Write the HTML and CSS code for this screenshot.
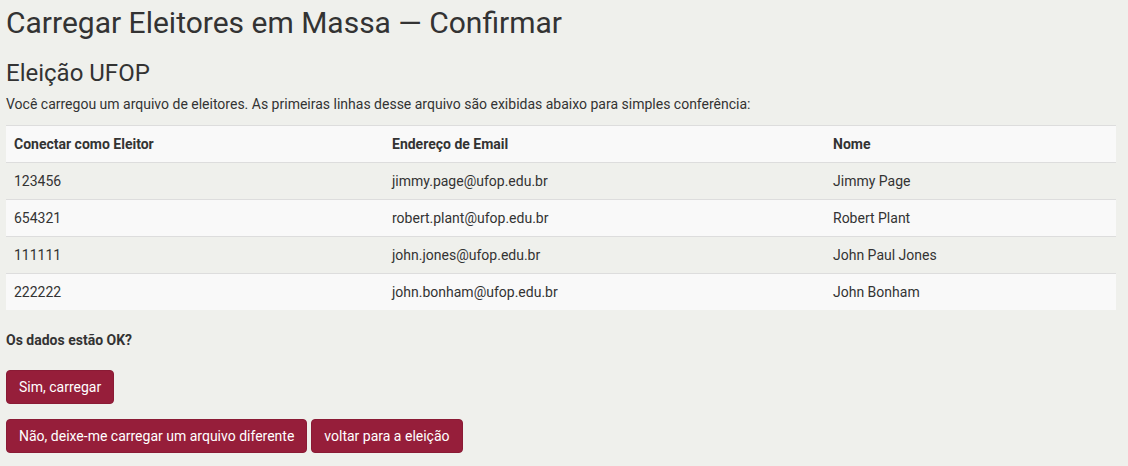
FILE: index.html
```html
<!DOCTYPE html>
<html lang="pt-BR">
<head>
<meta charset="utf-8">
<title>Carregar Eleitores em Massa — Confirmar</title>
<link rel="stylesheet" href="styles.css">
</head>
<body>
<main class="page">
  <h1 class="title">Carregar Eleitores em Massa — Confirmar</h1>
  <h2 class="subtitle">Eleição UFOP</h2>
  <p class="intro">Você carregou um arquivo de eleitores. As primeiras linhas desse arquivo são exibidas abaixo para simples conferência:</p>
  <table class="voters">
    <colgroup>
      <col class="c1"><col class="c2"><col class="c3">
    </colgroup>
    <thead>
      <tr><th>Conectar como Eleitor</th><th>Endereço de Email</th><th>Nome</th></tr>
    </thead>
    <tbody>
      <tr><td>123456</td><td>jimmy.page@ufop.edu.br</td><td>Jimmy Page</td></tr>
      <tr><td>654321</td><td>robert.plant@ufop.edu.br</td><td>Robert Plant</td></tr>
      <tr><td>111111</td><td>john.jones@ufop.edu.br</td><td>John Paul Jones</td></tr>
      <tr><td>222222</td><td>john.bonham@ufop.edu.br</td><td>John Bonham</td></tr>
    </tbody>
  </table>
  <p class="question">Os dados estão OK?</p>
  <div class="actions">
    <button class="btn" type="button">Sim, carregar</button>
  </div>
  <div class="actions second">
    <button class="btn" type="button">Não, deixe-me carregar um arquivo diferente</button>
    <button class="btn" type="button">voltar para a eleição</button>
  </div>
</main>
</body>
</html>
```
FILE: styles.css
```css
html, body {
  margin: 0;
  padding: 0;
  background: #eff0ec;
}
body {
  font-family: Roboto, "Liberation Sans", sans-serif;
  font-size: 14px;
  line-height: 20px;
  color: #333;
}
.page {
  padding: 0 12px 0 6px;
}
.title {
  font-size: 30px;
  font-weight: 400;
  line-height: 33px;
  margin: 6px 0 0;
}
.subtitle {
  font-size: 24px;
  font-weight: 400;
  line-height: 26px;
  margin: 21px 0 0;
}
.intro {
  margin: 8px 0 0;
}
.voters {
  width: 100%;
  margin-top: 11px;
  border-collapse: collapse;
  border-spacing: 0;
}
.c1 { width: 378px; }
.c2 { width: 441px; }
.voters th, .voters td {
  text-align: left;
  padding: 8px;
  line-height: 20px;
  border-top: 1px solid #ddd;
}
.voters th {
  font-weight: 700;
  background: #f9f9f9;
}
.voters tbody tr:nth-child(even) td {
  background: #f9f9f9;
}
.question {
  font-weight: 700;
  margin: 20px 0 0;
}
.actions {
  margin-top: 20px;
  display: flex;
  gap: 4px;
}
.actions.second {
  margin-top: 15px;
}
.btn {
  font-family: inherit;
  font-size: 14px;
  line-height: 20px;
  padding: 6px 12px;
  color: #fff;
  background: #961e3a;
  border: 1px solid #8a1b35;
  border-radius: 4px;
  cursor: pointer;
}
```
